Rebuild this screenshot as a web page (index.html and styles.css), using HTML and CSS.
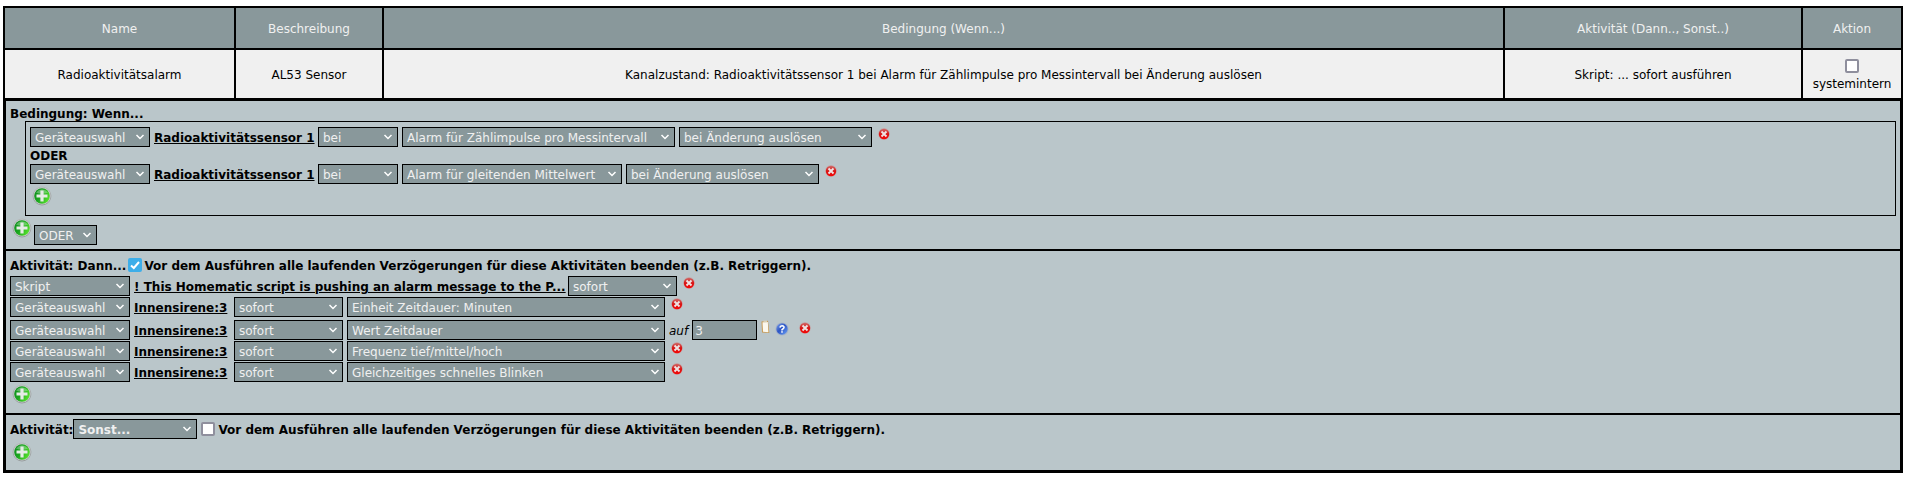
FILE: index.html
```html
<!DOCTYPE html>
<html lang="de">
<head>
<meta charset="utf-8">
<title>Programm: Radioaktivitätsalarm</title>
<link rel="stylesheet" href="styles.css">
</head>
<body>
<svg class="defs" aria-hidden="true">
  <defs>
    <linearGradient id="rim" x1="0" y1="0" x2="0" y2="1"><stop offset="0" stop-color="#b4b8b9"/><stop offset="1" stop-color="#989d9e"/></linearGradient>
    <linearGradient id="green" x1="0" y1="0" x2="1" y2="0.5"><stop offset="0" stop-color="#0d8a20"/><stop offset="0.5" stop-color="#1aa51f"/><stop offset="1" stop-color="#52dc2c"/></linearGradient>
    <linearGradient id="red" x1="0" y1="0" x2="0" y2="1"><stop offset="0" stop-color="#cf6a68"/><stop offset="0.5" stop-color="#d81414"/><stop offset="1" stop-color="#f40606"/></linearGradient>
    <linearGradient id="blue" x1="0" y1="0" x2="1" y2="1"><stop offset="0" stop-color="#7fa3ea"/><stop offset="0.45" stop-color="#2c55c4"/><stop offset="1" stop-color="#6ea4f8"/></linearGradient>
    <symbol id="add" viewBox="0 0 20 20">
      <circle cx="10" cy="10" r="9" fill="#c9cecf" stroke="url(#rim)"/>
      <circle cx="10" cy="10" r="7.800" fill="url(#green)"/>
      <path d="M4 6.500Q10 0 16 6.500Q10 9 4 6.500Z" fill="#fff" opacity="0.300"/>
      <path d="M8.400 4.500h3.200v3.900h3.900v3.200h-3.900v3.900H8.400v-3.900H4.500V8.400h3.900Z" fill="#e6ebe6"/>
    </symbol>
    <symbol id="remove" viewBox="0 0 12 12">
      <circle cx="6" cy="6" r="5.900" fill="#c3abad"/>
      <circle cx="6" cy="6" r="5.200" fill="url(#red)"/>
      <path d="M3.500 3.500l5 5M8.500 3.500l-5 5" stroke="#efe3e3" stroke-width="1.900"/>
    </symbol>
    <symbol id="help" viewBox="0 0 14 14">
      <circle cx="7" cy="7" r="6.600" fill="#aab5c6"/>
      <circle cx="7" cy="7" r="5.700" fill="url(#blue)"/>
      <path d="M5 5.600Q5.200 3.700 7.200 3.700Q9.200 3.800 9 5.500Q8.800 6.400 7 7.700V8.400" fill="none" stroke="#fff" stroke-width="1.500"/>
      <rect x="6.200" y="9.200" width="1.600" height="1.500" fill="#fff"/>
    </symbol>
    <symbol id="clip" viewBox="0 0 9 14">
      <path d="M0.500 1.500L7 0.800L8.400 13L1 12.600Z" fill="#c79a55"/>
      <path d="M1.500 2.300L6.800 2L7.400 12.200L2 11.700Z" fill="#fbf8ee"/>
      <path d="M2.500 0.500h3.500v1.800h-3.500Z" fill="#d8cfb5"/>
    </symbol>
  </defs>
</svg>

<table class="summary">
  <colgroup><col class="col-name"><col class="col-desc"><col><col class="col-activity"><col class="col-action"></colgroup>
  <thead>
    <tr><th>Name</th><th>Beschreibung</th><th>Bedingung (Wenn...)</th><th>Aktivität (Dann.., Sonst..)</th><th>Aktion</th></tr>
  </thead>
  <tbody>
    <tr>
      <td>Radioaktivitätsalarm</td>
      <td>AL53 Sensor</td>
      <td>Kanalzustand: Radioaktivitätssensor 1 bei Alarm für Zählimpulse pro Messintervall bei Änderung auslösen</td>
      <td>Skript: ... sofort ausführen</td>
      <td><label class="internal"><input type="checkbox" class="check">systemintern</label></td>
    </tr>
  </tbody>
</table>

<main class="editor">
  <section class="block condition">
    <h2 class="title">Bedingung: Wenn...</h2>
    <div class="group">
      <div class="row">
        <select class="select w-source" aria-label="Quelle"><option>Geräteauswahl</option></select>
        <a class="link w-sensor" href="#">Radioaktivitätssensor 1</a>
        <select class="select w-when" aria-label="Operator"><option>bei</option></select>
        <select class="select w-alarm" aria-label="Zustand"><option>Alarm für Zählimpulse pro Messintervall</option></select>
        <select class="select w-trigger" aria-label="Auslöser"><option>bei Änderung auslösen</option></select>
        <button class="icon remove" aria-label="Löschen"><svg><use href="#remove"/></svg></button>
      </div>
      <div class="operator">ODER</div>
      <div class="row">
        <select class="select w-source" aria-label="Quelle"><option>Geräteauswahl</option></select>
        <a class="link w-sensor" href="#">Radioaktivitätssensor 1</a>
        <select class="select w-when" aria-label="Operator"><option>bei</option></select>
        <select class="select w-mean" aria-label="Zustand"><option>Alarm für gleitenden Mittelwert</option></select>
        <select class="select w-trigger" aria-label="Auslöser"><option>bei Änderung auslösen</option></select>
        <button class="icon remove" aria-label="Löschen"><svg><use href="#remove"/></svg></button>
      </div>
      <button class="icon add" aria-label="Bedingung hinzufügen"><svg><use href="#add"/></svg></button>
    </div>
    <div class="join">
      <button class="icon add" aria-label="Gruppe hinzufügen"><svg><use href="#add"/></svg></button>
      <select class="select w-join" aria-label="Verknüpfung"><option>ODER</option></select>
    </div>
  </section>

  <section class="block then">
    <div class="heading">
      <h2 class="title">Aktivität: Dann...</h2>
      <label class="retrigger"><input type="checkbox" class="check" checked><span class="caption">Vor dem Ausführen alle laufenden Verzögerungen für diese Aktivitäten beenden (z.B. Retriggern).</span></label>
    </div>
    <div class="row">
      <select class="select w-source" aria-label="Quelle"><option>Skript</option></select>
      <a class="link w-script" href="#">! This Homematic script is pushing an alarm message to the P...</a>
      <select class="select w-delay" aria-label="Verzögerung"><option>sofort</option></select>
      <button class="icon remove" aria-label="Löschen"><svg><use href="#remove"/></svg></button>
    </div>
    <div class="row">
      <select class="select w-source" aria-label="Quelle"><option>Geräteauswahl</option></select>
      <a class="link w-siren" href="#">Innensirene:3</a>
      <select class="select w-delay" aria-label="Verzögerung"><option>sofort</option></select>
      <select class="select w-value" aria-label="Parameter"><option>Einheit Zeitdauer: Minuten</option></select>
      <button class="icon remove" aria-label="Löschen"><svg><use href="#remove"/></svg></button>
    </div>
    <div class="row spaced">
      <select class="select w-source" aria-label="Quelle"><option>Geräteauswahl</option></select>
      <a class="link w-siren" href="#">Innensirene:3</a>
      <select class="select w-delay" aria-label="Verzögerung"><option>sofort</option></select>
      <select class="select w-value" aria-label="Parameter"><option>Wert Zeitdauer</option></select>
      <label class="to" for="duration">auf</label>
      <input class="number" id="duration" type="text" value="3">
      <button class="icon clip" aria-label="Einfügen"><svg><use href="#clip"/></svg></button>
      <button class="icon help" aria-label="Hilfe"><svg><use href="#help"/></svg></button>
      <button class="icon remove" aria-label="Löschen"><svg><use href="#remove"/></svg></button>
    </div>
    <div class="row">
      <select class="select w-source" aria-label="Quelle"><option>Geräteauswahl</option></select>
      <a class="link w-siren" href="#">Innensirene:3</a>
      <select class="select w-delay" aria-label="Verzögerung"><option>sofort</option></select>
      <select class="select w-value" aria-label="Parameter"><option>Frequenz tief/mittel/hoch</option></select>
      <button class="icon remove" aria-label="Löschen"><svg><use href="#remove"/></svg></button>
    </div>
    <div class="row">
      <select class="select w-source" aria-label="Quelle"><option>Geräteauswahl</option></select>
      <a class="link w-siren" href="#">Innensirene:3</a>
      <select class="select w-delay" aria-label="Verzögerung"><option>sofort</option></select>
      <select class="select w-value" aria-label="Parameter"><option>Gleichzeitiges schnelles Blinken</option></select>
      <button class="icon remove" aria-label="Löschen"><svg><use href="#remove"/></svg></button>
    </div>
    <button class="icon add" aria-label="Aktivität hinzufügen"><svg><use href="#add"/></svg></button>
  </section>

  <section class="block else">
    <div class="heading">
      <h2 class="title">Aktivität:</h2>
      <select class="select w-else" aria-label="Zweig"><option>Sonst...</option></select>
      <label class="retrigger"><input type="checkbox" class="check"><span class="caption">Vor dem Ausführen alle laufenden Verzögerungen für diese Aktivitäten beenden (z.B. Retriggern).</span></label>
    </div>
    <button class="icon add" aria-label="Aktivität hinzufügen"><svg><use href="#add"/></svg></button>
  </section>
</main>
</body>
</html>
```
FILE: styles.css
```css
* { box-sizing: border-box; }

body {
  margin: 6px 7px 0 3px;
  background: #fff;
  color: #000;
  font: 12px/14px "DejaVu Sans", Verdana, sans-serif;
}

.defs { position: absolute; width: 0; height: 0; }

/* Summary table */
.summary {
  width: 100%;
  table-layout: fixed;
  border-collapse: collapse;
  text-align: center;
}
.summary th, .summary td { padding: 2px 4px 0; border: 2px solid #000; }
.summary th { height: 42px; background: #89989b; color: #f0f0f0; font-weight: normal; }
.summary td { height: 50px; background: #f0f0f0; }
.col-name { width: 231px; }
.col-desc { width: 148px; }
.col-activity { width: 298px; }
.col-action { width: 100px; }
.internal { display: flex; flex-direction: column; align-items: center; gap: 4px; }

/* Rule editor */
.editor { border: 3px solid #000; border-top-width: 1px; background: #bac6ca; }
.block { padding: 0 4px; }
.block + .block { border-top: 2px solid #000; }
.condition { padding-top: 6px; padding-bottom: 4px; }
.then { padding-top: 6px; padding-bottom: 9px; }
.else { padding-top: 4px; padding-bottom: 8px; }

.title { margin: 0; font-size: 12px; line-height: 14px; font-weight: bold; }
.group { margin-left: 15px; padding: 5px 4px 9px; border: 1px solid #000; }
.row { display: flex; align-items: center; gap: 4px; height: 20px; margin-bottom: 1px; }
.row.spaced { margin-top: 3px; }
.row + .add { margin-top: 2px; }
.operator { padding: 1px 0; font-weight: bold; }
.join { display: flex; gap: 2px; align-items: flex-start; padding-top: 2px; }
.join .select { margin-top: 7px; }
.heading { display: flex; align-items: center; gap: 2px; margin-bottom: 3px; font-weight: bold; }
.else .heading { gap: 0; }
.retrigger { display: flex; align-items: center; gap: 2px; }
.else .retrigger { margin-left: 4px; gap: 3px; }

.link { color: #000; font-weight: bold; text-decoration: underline; white-space: nowrap; }
.to { font-style: italic; }
.link, .to, .caption, .heading .title { padding-top: 2px; }

/* Controls */
.select, .number {
  flex: none;
  height: 20px;
  margin: 0;
  border: 1px solid #000;
  border-radius: 0;
  background-color: #89989b;
  color: #f0f0f0;
  font: inherit;
}
.select {
  appearance: none;
  padding: 2px 4px 0;
  background-image: url("data:image/svg+xml,%3Csvg xmlns='http://www.w3.org/2000/svg' width='10' height='6'%3E%3Cpath d='M1.500 1L5 4.500L8.500 1' fill='none' stroke='%23fff' stroke-width='1.500'/%3E%3C/svg%3E");
  background-repeat: no-repeat;
  background-position: right 4px center;
}
.number { width: 65px; padding: 2px 2px 0; }
.w-source { width: 120px; }
.w-sensor { width: 160px; }
.w-siren { width: 96px; }
.w-script { width: 430px; }
.w-when { width: 80px; }
.w-alarm { width: 273px; }
.w-mean { width: 220px; }
.w-trigger { width: 193px; }
.w-join { width: 63px; }
.w-delay { width: 109px; }
.w-value { width: 318px; }
.w-else { width: 124px; }

.check {
  appearance: none;
  flex: none;
  width: 14px;
  height: 14px;
  margin: 0;
  border: 2px solid #8f8f9d;
  border-radius: 2px;
  background: #fff;
}
.check:checked {
  border-color: #3daee9;
  background: #3daee9 url("data:image/svg+xml,%3Csvg xmlns='http://www.w3.org/2000/svg' width='10' height='10'%3E%3Cpath d='M1 5.500L3.800 8L9 2' fill='none' stroke='%23fff' stroke-width='2'/%3E%3C/svg%3E") center no-repeat;
}

.icon { display: block; flex: none; padding: 0; border: 0; background: none; }
.icon svg { display: block; width: 100%; height: 100%; }
.add { width: 20px; height: 20px; margin-left: 2px; }
.remove { width: 12px; height: 12px; margin: 1px 0 0 2px; align-self: flex-start; }
.clip { width: 9px; height: 14px; align-self: flex-start; }
.help { width: 14px; height: 14px; margin: 2px 0 0 1px; align-self: flex-start; }
.help + .remove { margin: 2px 0 0 6px; }
```
